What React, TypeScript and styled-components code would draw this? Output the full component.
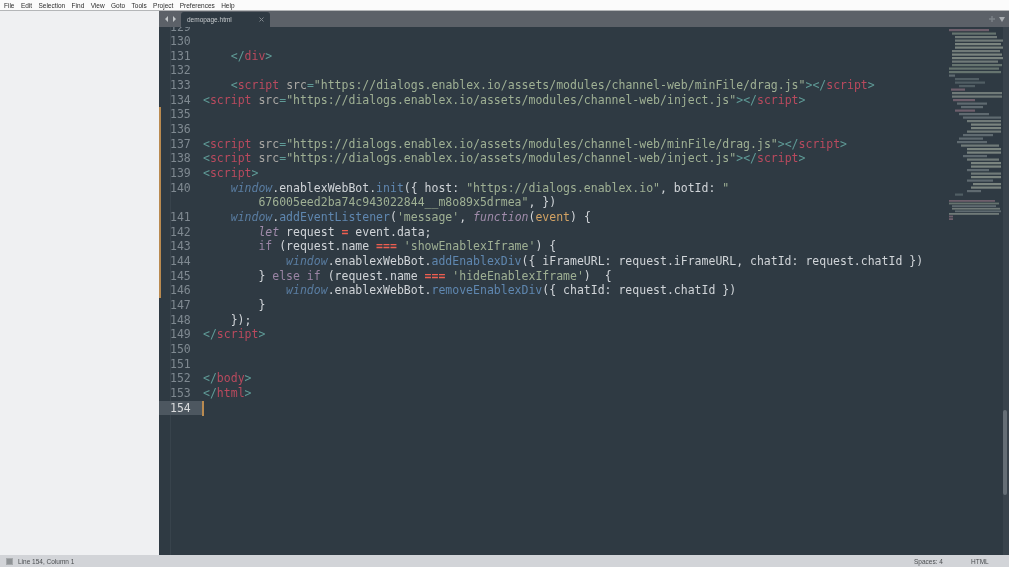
import { ReactNode } from "react";
import styled, { createGlobalStyle } from "styled-components";

const Global = createGlobalStyle`
    html, body {
        margin: 0;
        padding: 0;
        background: #ffffff;
        overflow: hidden;
    }
`;

const Window = styled.div`
    width: 1009px;
    height: 567px;
    display: flex;
    flex-direction: column;
    font-family: "Liberation Sans", Arial, sans-serif;
    filter: blur(0.45px);
`;

const MenuBar = styled.div`
    height: 10px;
    display: flex;
    align-items: center;
    gap: 6.4px;
    padding-left: 4px;
    background: #fbfbfb;
    border-bottom: 1px solid #b4b6b8;
    font-size: 6.5px;
    color: #2c2c2c;
`;

const Body = styled.div`
    flex: 1;
    min-height: 0;
    display: flex;
`;

const Sidebar = styled.div`
    width: 159px;
    background: #eff0f2;
`;

const Main = styled.div`
    flex: 1;
    min-width: 0;
    display: flex;
    flex-direction: column;
    background: #2f3a43;
`;

const TabBar = styled.div`
    height: 16px;
    display: flex;
    align-items: flex-end;
    background: #5c6168;
`;

const TabArrows = styled.div`
    width: 22px;
    height: 16px;
    display: flex;
    align-items: center;
    justify-content: center;
`;

const Tab = styled.div`
    width: 89px;
    height: 15px;
    display: flex;
    align-items: center;
    justify-content: space-between;
    padding: 0 6px;
    box-sizing: border-box;
    background: #2f3a43;
    border-radius: 3px 3px 0 0;
    color: #c6cacd;
    font-size: 6.5px;
`;

const TabRight = styled.div`
    margin-left: auto;
    height: 16px;
    display: flex;
    align-items: center;
    gap: 4px;
    padding-right: 4px;
`;

const Editor = styled.div`
    flex: 1;
    min-height: 0;
    display: flex;
    position: relative;
    overflow: hidden;
`;

const Gutter = styled.div`
    width: 44px;
    margin-top: -7.5px;
    display: flex;
    flex-direction: column;
    background: linear-gradient(#38434c, #38434c) 11px 0 / 1px 100% no-repeat;
`;

const LineNumber = styled.div<{ $active?: boolean; $changed?: boolean }>`
    height: 14.67px;
    flex: none;
    line-height: 14.67px;
    box-sizing: border-box;
    padding-left: 9px;
    font-family: "DejaVu Sans Mono", monospace;
    font-size: 11.5px;
    color: ${(p) => (p.$active ? "#d8dadc" : "#7f8991")};
    background: ${(p) => (p.$active ? "#4d5760" : "transparent")};
    border-left: 2px solid ${(p) => (p.$changed ? "#b98a50" : "transparent")};
`;

const Code = styled.div`
    flex: 1;
    min-width: 0;
    margin-top: -7.5px;
    display: flex;
    flex-direction: column;
    font-family: "DejaVu Sans Mono", monospace;
    font-size: 11.5px;
    color: #d0d4d8;
`;

const CodeLine = styled.div`
    height: 14.67px;
    flex: none;
    line-height: 14.67px;
    white-space: pre;
    position: relative;
`;

const Caret = styled.span`
    position: absolute;
    left: -1px;
    top: 0;
    width: 1.5px;
    height: 15px;
    background: #b98a50;
`;

const Tag = styled.span`
    color: #b94a5e;
`;
const Punct = styled.span`
    color: #5f9a96;
`;
const Attr = styled.span`
    color: #aaa8a4;
`;
const Str = styled.span`
    color: #9fb094;
`;
const Var = styled.span`
    color: #5a7ea3;
    font-style: italic;
`;
const Method = styled.span`
    color: #5f87b0;
`;
const Keyword = styled.span`
    color: #9a84a4;
`;
const KeywordItalic = styled.span`
    color: #a08cab;
    font-style: italic;
`;
const Op = styled.span`
    color: #ee5f50;
    font-weight: bold;
`;
const Param = styled.span`
    color: #d2a263;
`;

const Minimap = styled.div`
    position: absolute;
    left: 790px;
    top: 2px;
`;

const Scrollbar = styled.div`
    position: absolute;
    right: 0;
    top: 0;
    bottom: 0;
    width: 6px;
    background: #39434c;
`;

const ScrollThumb = styled.div`
    position: absolute;
    left: 0;
    width: 4px;
    top: 383px;
    height: 85px;
    border-radius: 2px;
    background: #656e76;
`;

const StatusBar = styled.div`
    height: 12px;
    display: flex;
    align-items: center;
    padding-left: 6px;
    background: #d2d4d8;
    color: #4a4d50;
    font-size: 6.5px;
`;

const PanelSwitch = styled.span`
    width: 7px;
    height: 7px;
    margin-right: 5px;
    background: #8f9396;
    border: 1px solid #a6a9ac;
    box-sizing: border-box;
`;

const StatusItem = styled.span<{ $width?: number }>`
    width: ${(p) => (p.$width ? `${p.$width}px` : "auto")};
`;

const Spacer = styled.span`
    flex: 1;
`;

const menus = ["File", "Edit", "Selection", "Find", "View", "Goto", "Tools", "Project", "Preferences", "Help"];

const OpenScript = ({ suffix }: { suffix: string }) => (
    <>
        <Punct>&lt;</Punct>
        <Tag>script</Tag> <Attr>src</Attr>
        <Punct>=</Punct>
        <Str>"https://dialogs.enablex.io/assets/modules/channel-web/{suffix}"</Str>
        <Punct>&gt;&lt;/</Punct>
        <Tag>script</Tag>
        <Punct>&gt;</Punct>
    </>
);

const lines: { n: number | null; changed?: boolean; active?: boolean; code?: ReactNode }[] = [
    { n: 129 },
    { n: 130 },
    {
        n: 131,
        code: (
            <>
                {"    "}
                <Punct>&lt;/</Punct>
                <Tag>div</Tag>
                <Punct>&gt;</Punct>
            </>
        ),
    },
    { n: 132 },
    {
        n: 133,
        code: (
            <>
                {"    "}
                <OpenScript suffix="minFile/drag.js" />
            </>
        ),
    },
    { n: 134, code: <OpenScript suffix="inject.js" /> },
    { n: 135, changed: true },
    { n: 136, changed: true },
    { n: 137, changed: true, code: <OpenScript suffix="minFile/drag.js" /> },
    { n: 138, changed: true, code: <OpenScript suffix="inject.js" /> },
    {
        n: 139,
        changed: true,
        code: (
            <>
                <Punct>&lt;</Punct>
                <Tag>script</Tag>
                <Punct>&gt;</Punct>
            </>
        ),
    },
    {
        n: 140,
        changed: true,
        code: (
            <>
                {"    "}
                <Var>window</Var>.enablexWebBot.<Method>init</Method>
                {"({ host: "}
                <Str>"https://dialogs.enablex.io"</Str>
                {", botId: "}
                <Str>"</Str>
            </>
        ),
    },
    {
        n: null,
        changed: true,
        code: (
            <>
                {"        "}
                <Str>676005eed2ba74c943022844__m8o89x5drmea"</Str>
                {", })"}
            </>
        ),
    },
    {
        n: 141,
        changed: true,
        code: (
            <>
                {"    "}
                <Var>window</Var>.<Method>addEventListener</Method>(<Str>'message'</Str>,{" "}
                <KeywordItalic>function</KeywordItalic>(<Param>event</Param>) {"{"}
            </>
        ),
    },
    {
        n: 142,
        changed: true,
        code: (
            <>
                {"        "}
                <KeywordItalic>let</KeywordItalic> request <Op>=</Op> event.data;
            </>
        ),
    },
    {
        n: 143,
        changed: true,
        code: (
            <>
                {"        "}
                <Keyword>if</Keyword> (request.name <Op>===</Op> <Str>'showEnablexIframe'</Str>) {"{"}
            </>
        ),
    },
    {
        n: 144,
        changed: true,
        code: (
            <>
                {"            "}
                <Var>window</Var>.enablexWebBot.<Method>addEnablexDiv</Method>
                {"({ iFrameURL: request.iFrameURL, chatId: request.chatId })"}
            </>
        ),
    },
    {
        n: 145,
        changed: true,
        code: (
            <>
                {"        } "}
                <Keyword>else if</Keyword> (request.name <Op>===</Op> <Str>'hideEnablexIframe'</Str>
                {")  {"}
            </>
        ),
    },
    {
        n: 146,
        changed: true,
        code: (
            <>
                {"            "}
                <Var>window</Var>.enablexWebBot.<Method>removeEnablexDiv</Method>
                {"({ chatId: request.chatId })"}
            </>
        ),
    },
    { n: 147, code: "        }" },
    { n: 148, code: "    });" },
    {
        n: 149,
        code: (
            <>
                <Punct>&lt;/</Punct>
                <Tag>script</Tag>
                <Punct>&gt;</Punct>
            </>
        ),
    },
    { n: 150 },
    { n: 151 },
    {
        n: 152,
        code: (
            <>
                <Punct>&lt;/</Punct>
                <Tag>body</Tag>
                <Punct>&gt;</Punct>
            </>
        ),
    },
    {
        n: 153,
        code: (
            <>
                <Punct>&lt;/</Punct>
                <Tag>html</Tag>
                <Punct>&gt;</Punct>
            </>
        ),
    },
    { n: 154, active: true },
];

// rough minimap strokes: indent, width, colour
const miniRows: [number, number, string][] = [
    [0, 40, "#6e5f6c"], [3, 44, "#66746f"], [6, 42, "#707a78"], [6, 48, "#707a78"], [6, 46, "#7a847f"],
    [6, 50, "#7a847f"], [3, 48, "#707a78"], [3, 50, "#7a847f"], [3, 52, "#7a847f"], [3, 46, "#707a78"],
    [3, 50, "#66746f"], [0, 50, "#66746f"], [0, 52, "#66746f"], [0, 6, "#5f6a70"], [6, 24, "#515e64"],
    [6, 30, "#515e64"], [10, 16, "#515e64"], [2, 14, "#6e5f6c"], [3, 50, "#707a78"], [3, 50, "#707a78"],
    [4, 22, "#6e5f6c"], [8, 30, "#5f6a70"], [12, 22, "#5f6a70"], [6, 20, "#6e5f6c"], [10, 30, "#5f6a70"],
    [14, 38, "#5f6a70"], [18, 34, "#707a78"], [22, 30, "#7a847f"], [22, 30, "#7a847f"], [18, 34, "#707a78"],
    [14, 30, "#5f6a70"], [10, 24, "#5f6a70"], [8, 30, "#5f6a70"], [12, 38, "#707a78"], [18, 34, "#7a847f"],
    [18, 34, "#7a847f"], [14, 24, "#5f6a70"], [18, 32, "#707a78"], [22, 30, "#7a847f"], [22, 30, "#7a847f"],
    [18, 22, "#5f6a70"], [22, 30, "#707a78"], [22, 30, "#7a847f"], [18, 26, "#5f6a70"], [24, 28, "#7a847f"],
    [22, 30, "#7a847f"], [18, 14, "#5f6a70"], [6, 8, "#515e64"],
];

const miniTail: [number, number, string][] = [
    [0, 46, "#6e5f6c"], [0, 50, "#66746f"], [3, 44, "#5f6a70"], [3, 48, "#707a78"], [6, 46, "#5f6a70"],
    [0, 50, "#707a78"], [0, 4, "#6e5f6c"], [0, 4, "#6e5f6c"],
];

export default function App() {
    return (
        <>
            <Global />
            <Window>
                <MenuBar>
                    {menus.map((m) => (
                        <span key={m}>{m}</span>
                    ))}
                </MenuBar>
                <Body>
                    <Sidebar />
                    <Main>
                        <TabBar>
                            <TabArrows>
                                <svg width="11" height="6" viewBox="0 0 11 6">
                                    <path d="M3 0v6L0 3zM8 0v6l3-3z" fill="#c2c6c9" />
                                </svg>
                            </TabArrows>
                            <Tab>
                                <span>demopage.html</span>
                                <svg width="5" height="5" viewBox="0 0 5 5">
                                    <path d="M0.5 0.5l4 4M4.5 0.5l-4 4" stroke="#7f868c" strokeWidth="1" />
                                </svg>
                            </Tab>
                            <TabRight>
                                <svg width="6" height="6" viewBox="0 0 6 6">
                                    <path d="M3 0v6M0 3h6" stroke="#7c8288" strokeWidth="1.4" />
                                </svg>
                                <svg width="6" height="5" viewBox="0 0 6 5">
                                    <path d="M0 0h6L3 5z" fill="#a9adb1" />
                                </svg>
                            </TabRight>
                        </TabBar>
                        <Editor>
                            <Gutter>
                                {lines.map((l, i) => (
                                    <LineNumber key={i} $active={l.active} $changed={l.changed}>
                                        {l.n ?? ""}
                                    </LineNumber>
                                ))}
                            </Gutter>
                            <Code>
                                {lines.map((l, i) => (
                                    <CodeLine key={i}>
                                        {l.active && <Caret />}
                                        {l.code}
                                    </CodeLine>
                                ))}
                            </Code>
                            <Minimap>
                                <svg width="56" height="198" viewBox="0 0 56 198">
                                    {miniRows.map(([x, w, c], i) => (
                                        <rect key={i} x={x} y={i * 3.5} width={w} height={2.2} fill={c} />
                                    ))}
                                    {miniTail.map(([x, w, c], i) => (
                                        <rect key={i} x={x} y={171 + i * 2.6} width={w} height={1.8} fill={c} />
                                    ))}
                                </svg>
                            </Minimap>
                            <Scrollbar>
                                <ScrollThumb />
                            </Scrollbar>
                        </Editor>
                    </Main>
                </Body>
                <StatusBar>
                    <PanelSwitch />
                    <StatusItem>Line 154, Column 1</StatusItem>
                    <Spacer />
                    <StatusItem $width={57}>Spaces: 4</StatusItem>
                    <StatusItem $width={38}>HTML</StatusItem>
                </StatusBar>
            </Window>
        </>
    );
}
